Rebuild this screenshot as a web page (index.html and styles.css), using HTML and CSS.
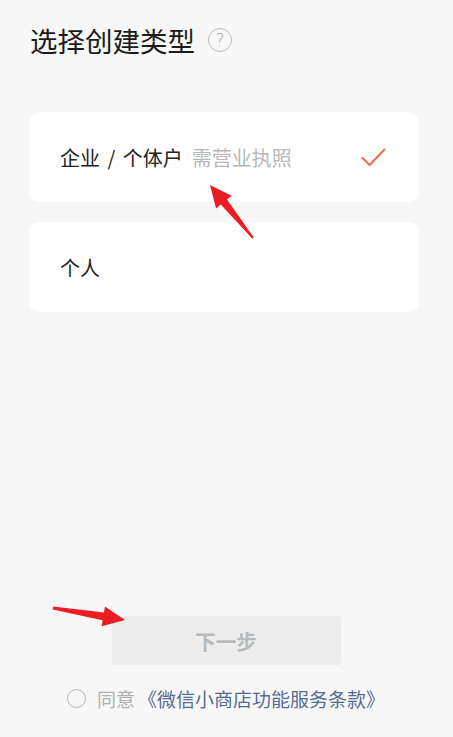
FILE: index.html
```html
<!DOCTYPE html>
<html lang="zh">
<head>
<meta charset="utf-8">
<link rel="stylesheet" href="styles.css">
</head>
<body>
<div class="page">
  <div class="header">
    <h1 class="title">选择创建类型</h1>
    <span class="help">?</span>
  </div>
  <div class="options">
    <div class="card">
      <span class="label">企业 / 个体户</span>
      <span class="hint">需营业执照</span>
      <svg class="check" width="25" height="19" viewBox="0 0 25 19"><polyline points="1.5,10 8.5,17 23.5,1.5" fill="none" stroke="#f7694a" stroke-width="2" stroke-linecap="round" stroke-linejoin="round"/></svg>
    </div>
    <div class="card">
      <span class="label">个人</span>
    </div>
  </div>
  <div class="footer">
    <button class="next">下一步</button>
    <div class="agree">
      <span class="radio"></span>
      <span class="agree-text">同意</span>
      <span class="link">《微信小商店功能服务条款》</span>
    </div>
  </div>
  <svg class="arrows" width="453" height="737" viewBox="0 0 453 737">
    <polygon fill="#ea1c24" points="210,185 231.7,195.8 227,199.6 253.8,237.4 252.2,238.6 220.8,204.6 216.1,208.4"/>
    <polygon fill="#ea1c24" points="125,620 101.7,626.3 102.6,620.3 52.8,609.5 53.2,606.5 104,612.5 104.9,606.5"/>
  </svg>
</div>
</body>
</html>
```
FILE: styles.css
```css
html, body {
  margin: 0;
  padding: 0;
  background: #f7f7f7;
}
body {
  font-family: "Noto Sans CJK SC", "Noto Sans", sans-serif;
}
.page {
  position: relative;
  width: 453px;
  height: 737px;
  display: flex;
  flex-direction: column;
  box-sizing: border-box;
  padding: 0 34px 27px 29px;
}
.header {
  display: flex;
  align-items: center;
  margin-top: 21px;
  height: 38px;
}
.title {
  margin: 0 0 0 1px;
  font-size: 27.5px;
  font-weight: 400;
  line-height: 38px;
  color: #1b1b1b;
}
.help {
  margin-left: 13px;
  width: 22px;
  height: 22px;
  border: 1.5px solid #b8b8b8;
  border-radius: 50%;
  color: #a8a8a8;
  font-size: 17px;
  line-height: 22px;
  text-align: center;
  font-family: "DejaVu Sans", sans-serif;
  font-weight: 300;
}
.options {
  display: flex;
  flex-direction: column;
  gap: 20px;
  margin-top: 53px;
}
.card {
  height: 90px;
  background: #ffffff;
  border-radius: 10px;
  display: flex;
  align-items: center;
  padding: 0 33px 0 31px;
  font-size: 20px;
}
.label {
  color: #222222;
  word-spacing: 3px;
}
.hint {
  margin-left: 9px;
  color: #b8b8b8;
}
.check {
  margin-left: auto;
  margin-top: 1px;
}
.footer {
  margin-top: auto;
  display: flex;
  flex-direction: column;
  align-items: center;
}
.next {
  width: 229px;
  height: 49px;
  margin-left: 4px;
  border: none;
  border-radius: 4px;
  background: #ececec;
  color: #b9b9b9;
  font-family: inherit;
  font-size: 20.5px;
  font-weight: 700;
}
.agree {
  display: flex;
  align-items: center;
  margin-top: 21px;
  height: 24px;
  font-size: 19px;
  align-self: flex-start;
  margin-left: 38px;
}
.radio {
  width: 17px;
  height: 17px;
  border: 1.5px solid #b5b5b5;
  border-radius: 50%;
}
.agree-text {
  margin-left: 11px;
  color: #b0b0b0;
}
.link {
  margin-left: 3px;
  color: #576b95;
}
.arrows {
  position: absolute;
  left: 0;
  top: 0;
  pointer-events: none;
}
```
